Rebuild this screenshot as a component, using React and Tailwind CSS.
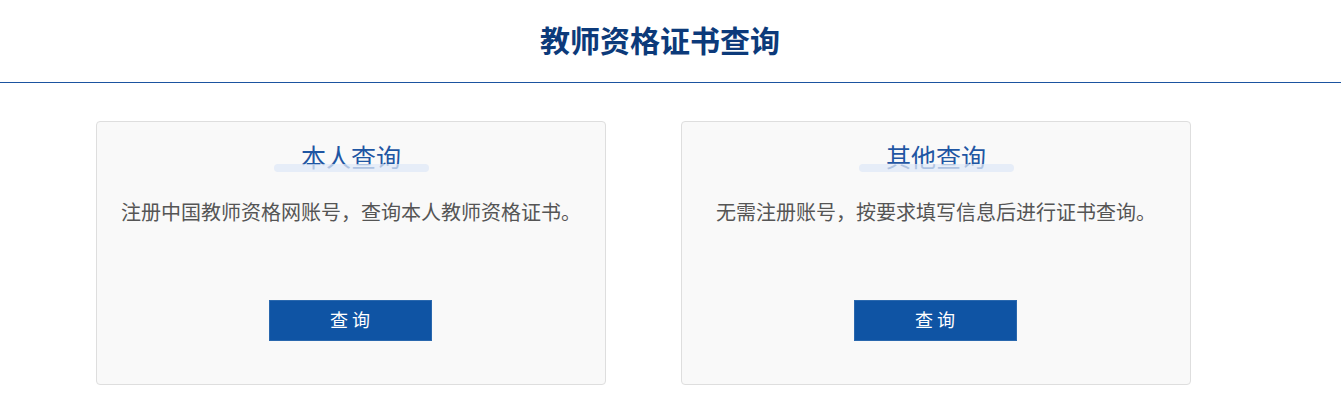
export default function App() {
  const cards = [
    { title: "本人查询", desc: "注册中国教师资格网账号，查询本人教师资格证书。" },
    { title: "其他查询", desc: "无需注册账号，按要求填写信息后进行证书查询。" },
  ];
  return (
    <div
      className="w-[1341px] h-[407px] bg-white overflow-hidden"
      style={{ fontFamily: '"Noto Sans CJK SC", "Noto Sans", sans-serif' }}
    >
      <div className="h-[83px] border-b border-[#1b54a0] flex items-center justify-center pr-[21px] pb-[4px]">
        <h1 className="text-[30px] leading-none font-bold text-[#0c3a7a]">教师资格证书查询</h1>
      </div>
      <div className="flex gap-[75px] pl-[96px] pt-[38px]">
        {cards.map((c) => (
          <div
            key={c.title}
            className="w-[510px] h-[264px] bg-[#f9f9f9] border border-[#dedede] rounded-[4px] flex flex-col items-center"
          >
            <div className="relative mt-[18px] h-[32px] flex items-center justify-center w-[155px]">
              <span className="text-[25px] leading-none text-[#1f56a3]">{c.title}</span>
              <div className="absolute left-0 right-0 top-[24px] h-[8px] rounded-full bg-[#dfe8f7] opacity-75"></div>
            </div>
            <p className="mt-[30px] text-[20px] leading-none text-[#555555]">{c.desc}</p>
            <button className="mt-[78px] mr-[2px] w-[163px] h-[41px] bg-[#0f54a4] border border-[#2a68ae] text-white text-[18px] leading-none tracking-[4px] pl-[4px] pb-[4px]">
              查询
            </button>
          </div>
        ))}
      </div>
    </div>
  );
}
